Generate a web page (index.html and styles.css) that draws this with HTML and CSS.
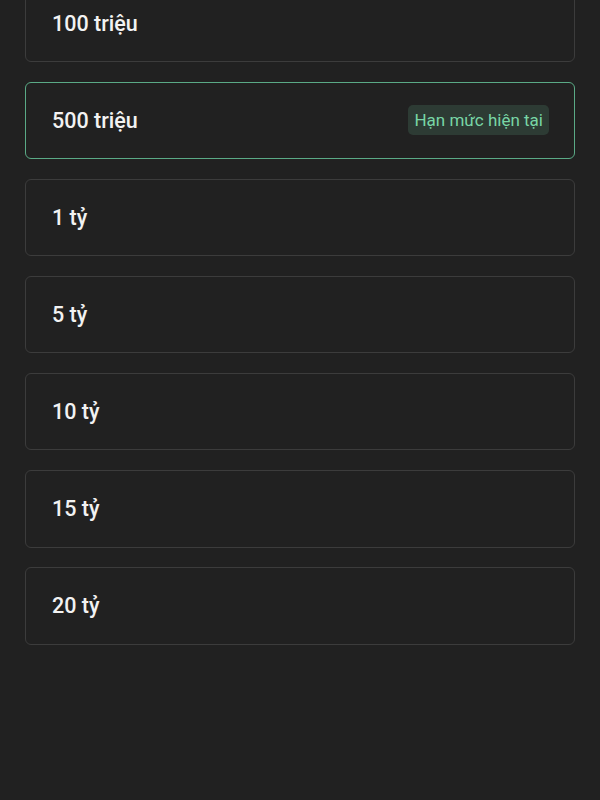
FILE: index.html
```html
<!DOCTYPE html>
<html lang="vi">
<head>
  <meta charset="UTF-8">
  <meta name="viewport" content="width=device-width, initial-scale=1.0">
  <title>Hạn mức</title>
  <link rel="stylesheet" href="styles.css">
</head>
<body>
  <div class="limit-list">
    <div class="limit-item"><span class="amount">100 triệu</span></div>
    <div class="limit-item active">
      <span class="amount">500 triệu</span>
      <span class="badge">Hạn mức hiện tại</span>
    </div>
    <div class="limit-item"><span class="amount">1 tỷ</span></div>
    <div class="limit-item"><span class="amount">5 tỷ</span></div>
    <div class="limit-item"><span class="amount">10 tỷ</span></div>
    <div class="limit-item"><span class="amount">15 tỷ</span></div>
    <div class="limit-item"><span class="amount">20 tỷ</span></div>
  </div>
</body>
</html>
```

FILE: styles.css
```css
/* Reset */
* {
  margin: 0;
  padding: 0;
  box-sizing: border-box;
  font-family: Roboto, "Noto Sans", sans-serif;
}

body {
  background-color: #212121;
  color: #f2f2f2;
  height: 800px;
  overflow: hidden;
}

/* List of limits */
.limit-list {
  display: flex;
  flex-direction: column;
  gap: 19.6px;
  margin-top: -15.4px;
  padding: 0 25px 0 25px;
}

.limit-item {
  height: 77.5px;
  display: flex;
  align-items: center;
  justify-content: space-between;
  padding: 0 25px 0 26px;
  border: 1.5px solid #3c3c3c;
  border-radius: 6px;
}

.limit-item.active {
  border-color: #5aaa86;
}

.amount {
  font-size: 21.5px;
  font-weight: 500;
}

/* Current limit badge */
.badge {
  background-color: #2d3b34;
  color: #78d6a6;
  font-size: 17px;
  line-height: 20px;
  padding: 5px 6px;
  border-radius: 5px;
}
```
